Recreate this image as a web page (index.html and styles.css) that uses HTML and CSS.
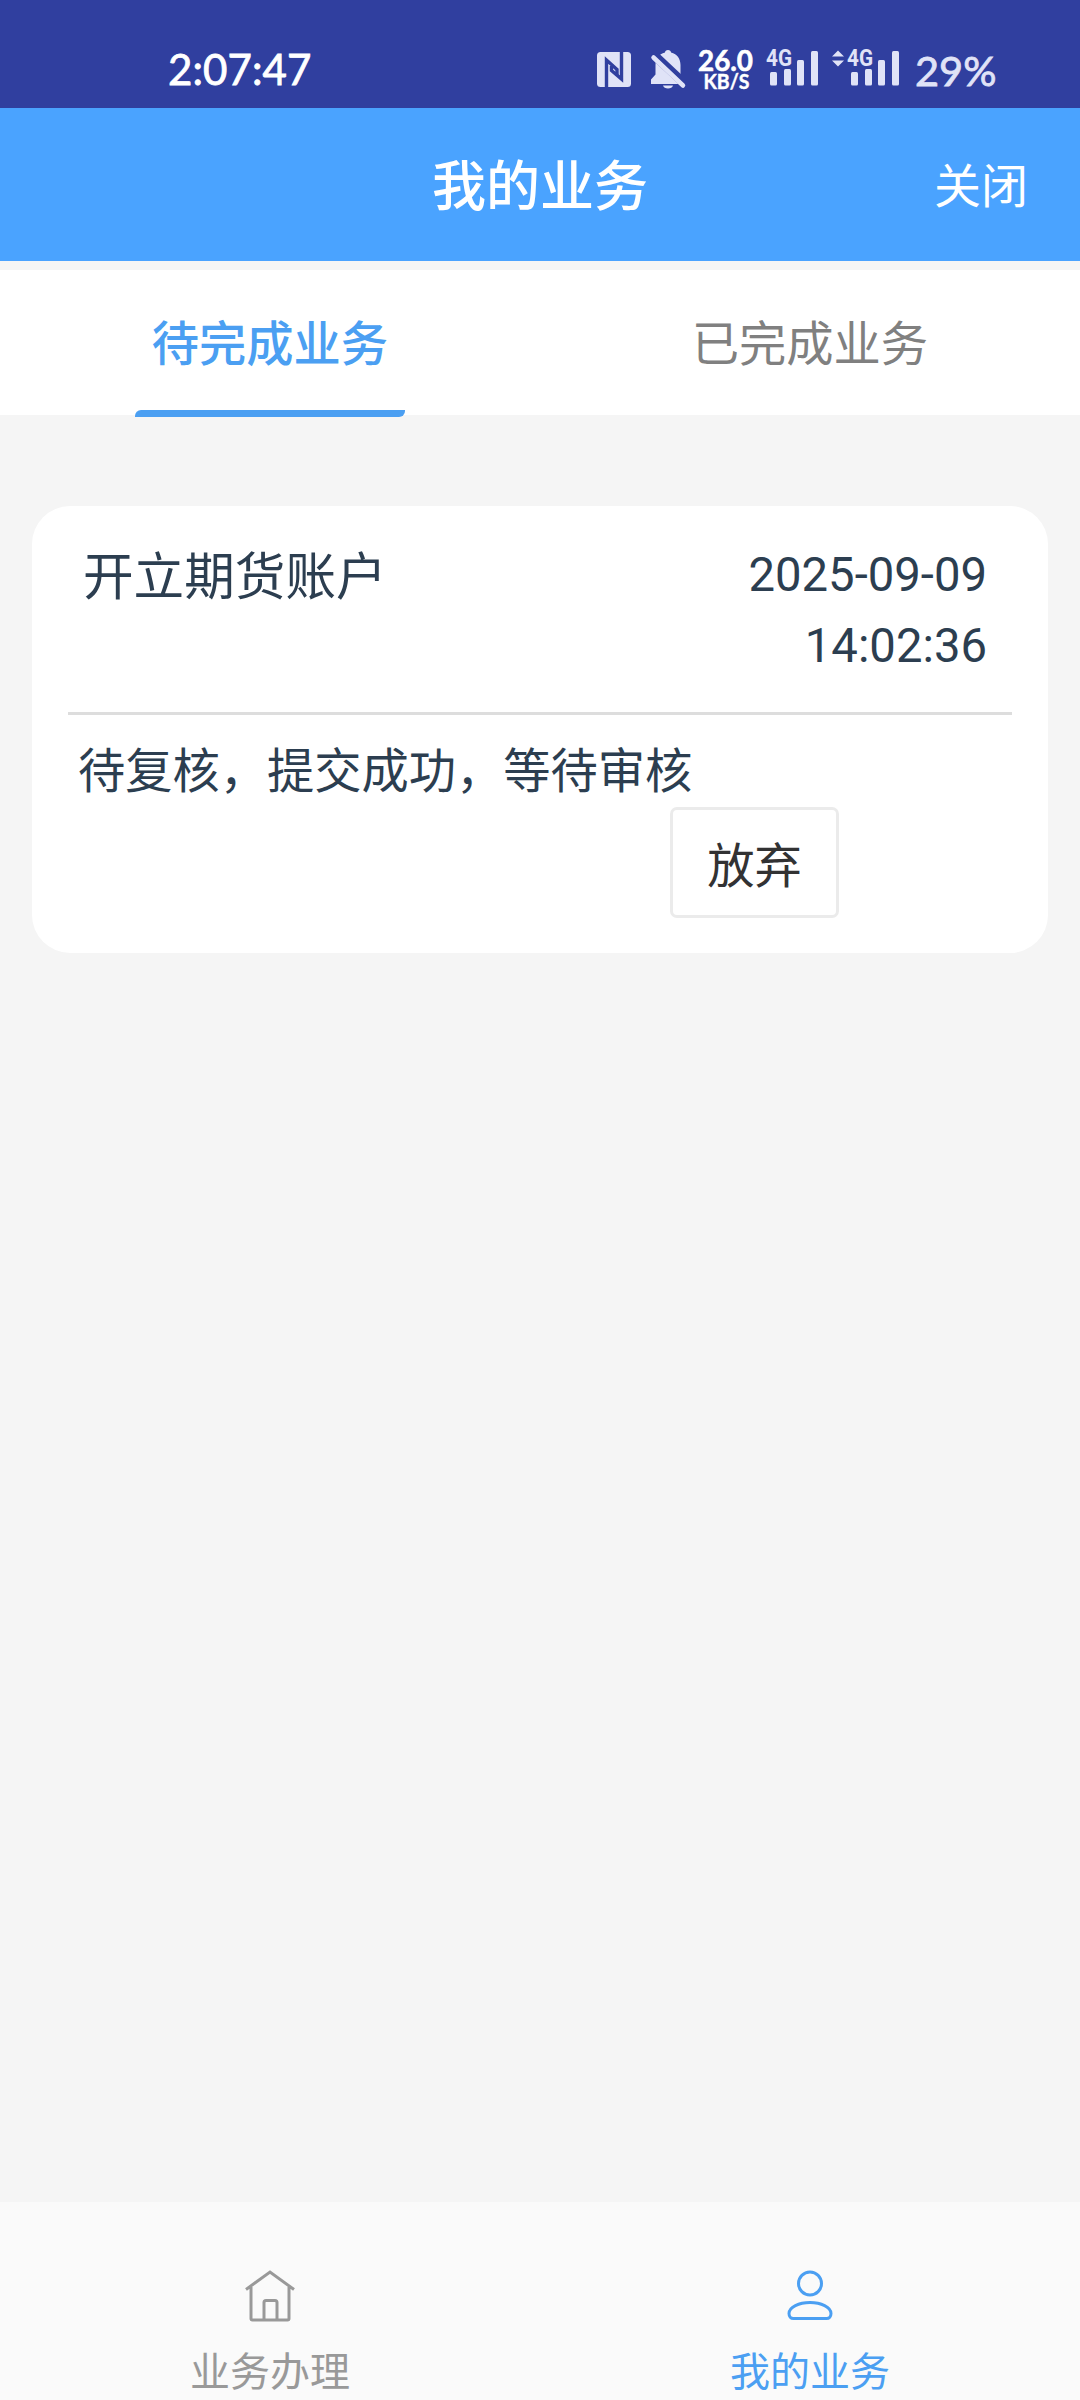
FILE: index.html
```html
<!DOCTYPE html>
<html lang="zh-CN">
<head>
<meta charset="utf-8">
<title>我的业务</title>
<link rel="stylesheet" href="styles.css">
</head>
<body>
<div class="status-bar">
  <span class="clock">2:07:47</span>
  <svg class="status-icons" width="320" height="60" viewBox="580 40 320 60">
    <rect x="597" y="52" width="34" height="35" rx="3.5"/>
    <g class="knock">
      <path d="M606.500 87V60L617 69.500V76"/>
      <path d="M621.500 52V79L611.500 70.500V66"/>
    </g>
    <path d="M668 50c1.800 0 3 1.100 3 2.600 6.300 1.400 9.500 6.400 9.500 12.400v9.500l4.500 5V84h-34v-4.500l4.500-5V65c0-6 3.200-11 9.500-12.400 0-1.500 1.200-2.600 3-2.600z"/>
    <path d="M663 85.500h10c-.5 2-2.500 3-5 3s-4.500-1-5-3z"/>
    <path class="gap" d="M653 54L686 85"/>
    <path class="slash" d="M653.500 57.500L683 85.500"/>
    <text class="speed" x="698" y="70.500" textLength="55" lengthAdjust="spacingAndGlyphs">26.0</text>
    <text class="unit" x="703.500" y="89" textLength="46" lengthAdjust="spacingAndGlyphs">KB/S</text>
    <text class="net" x="766" y="66" textLength="26" lengthAdjust="spacingAndGlyphs">4G</text>
    <rect x="770" y="72" width="7" height="13.500" rx="1.500"/>
    <rect x="784" y="69" width="7" height="16.500" rx="1.500"/>
    <rect x="797" y="60" width="7" height="25.500" rx="1.500"/>
    <rect x="811" y="51" width="7" height="34.500" rx="1.500"/>
    <path d="M832 56.500l6-6 6 6zM832 60.500l6 6 6-6z"/>
    <text class="net" x="847" y="66" textLength="26" lengthAdjust="spacingAndGlyphs">4G</text>
    <rect x="851" y="72" width="7" height="13.500" rx="1.500"/>
    <rect x="865" y="69" width="7" height="16.500" rx="1.500"/>
    <rect x="878" y="60" width="7" height="25.500" rx="1.500"/>
    <rect x="892" y="51" width="7" height="34.500" rx="1.500"/>
  </svg>
  <span class="battery">29%</span>
</div>

<header class="title-bar">
  <h1 class="title">我的业务</h1>
  <a class="close">关闭</a>
</header>

<nav class="tabs">
  <a class="tab tab-active">待完成业务</a>
  <a class="tab">已完成业务</a>
</nav>

<main class="content">
  <section class="card">
    <div class="card-head">
      <h2 class="card-title">开立期货账户</h2>
      <time class="card-time">2025-09-09<br>14:02:36</time>
    </div>
    <p class="card-status">待复核，提交成功，等待审核</p>
    <button class="abandon">放弃</button>
  </section>
</main>

<footer class="bottom-nav">
  <a class="nav-item">
    <svg class="nav-icon" width="60" height="60" viewBox="0 0 60 60">
      <path d="M6 25.500L30 8l24 17.500M11 23v31.500q0 1.500 1.500 1.500h35q1.500 0 1.500-1.500V23M24 56V38.500q0-2 2-2h9q2 0 2 2V56"/>
    </svg>
    <span>业务办理</span>
  </a>
  <a class="nav-item nav-active">
    <svg class="nav-icon" width="60" height="60" viewBox="0 0 60 60">
      <circle cx="30" cy="19.500" r="11.500"/>
      <path d="M30 38.500c11 0 21 4.500 21 11 0 3-1.800 5-4.500 5h-33c-2.700 0-4.500-2-4.500-5 0-6.500 10-11 21-11z"/>
    </svg>
    <span>我的业务</span>
  </a>
</footer>
</body>
</html>
```
FILE: styles.css
```css
* { box-sizing: border-box; }
body {
  margin: 0;
  width: 1080px;
  height: 2400px;
  overflow: hidden;
  display: flex;
  flex-direction: column;
  background: #f5f5f5;
  color: #2c3e50;
  font-family: Roboto, "Noto Sans CJK SC", sans-serif;
}
h1, h2, p { margin: 0; font-weight: 400; }

.status-bar {
  height: 108px;
  padding: 40px 0 8px 168px;
  display: flex;
  align-items: flex-start;
  background: #303f9f;
  color: #fff;
  font-family: Lato, sans-serif;
}
.clock {
  width: 412px;
  font-size: 42px;
  line-height: 58px;
  letter-spacing: 0.1px;
  -webkit-text-stroke: 0.8px currentColor;
}
.status-icons { display: block; flex: none; fill: #e0e3f7; }
.knock { fill: none; stroke: #303f9f; stroke-width: 3.4; }
.gap { stroke: #303f9f; stroke-width: 9; }
.slash { stroke: #e0e3f7; stroke-width: 4.5; stroke-linecap: round; }
.speed { font: 700 29px Lato, sans-serif; fill: #fff; stroke: #fff; stroke-width: 0.6; }
.unit { font: 700 20px Lato, sans-serif; fill: #fff; stroke: #fff; stroke-width: 0.4; }
.net { font: 700 23px Roboto, sans-serif; }
.battery {
  margin-left: 15px;
  color: #e0e3f7;
  font-size: 41.5px;
  line-height: 61px;
  -webkit-text-stroke: 0.8px currentColor;
}

.title-bar {
  height: 153px;
  padding: 0 52px 5px;
  display: grid;
  grid-template-columns: 1fr auto 1fr;
  align-items: center;
  background: #4aa3ff;
  color: #fff;
}
.title { grid-column: 2; font-size: 54px; font-weight: 500; }
.close { justify-self: end; font-size: 47px; }

.tabs {
  margin-top: 9px;
  height: 145px;
  display: flex;
  background: #fff;
}
.tab {
  flex: 1;
  height: 147px;
  display: flex;
  flex-direction: column;
  align-items: center;
  font-size: 47.25px;
  line-height: 150px;
  color: #808080;
}
.tab-active { color: #4b9ff2; font-weight: 500; }
.tab-active::after {
  content: "";
  width: 270px;
  height: 7px;
  flex: none;
  margin-top: -10px;
  border-radius: 6px 0;
  background: #4b9ff2;
}

.content { flex: 1; padding: 91px 32px 0; }
.card {
  height: 447px;
  padding: 34px 36px 0;
  display: flex;
  flex-direction: column;
  border-radius: 38px;
  background: #fff;
}
.card-head {
  height: 175px;
  padding: 0 25px 0 15px;
  display: flex;
  justify-content: space-between;
  border-bottom: 3px solid #ddd;
}
.card-title { font-size: 50.6px; line-height: 76px; }
.card-time { font-size: 47.25px; line-height: 71px; text-align: right; }
.card-status { padding-left: 10px; margin-top: 22px; font-size: 47.25px; line-height: 71px; }
.abandon {
  margin: -1px 0 0 602px;
  width: 169px;
  height: 111px;
  padding: 0;
  border: 3px solid #ebebeb;
  border-radius: 7px;
  background: #fff;
  color: #323233;
  font: 47.25px "Noto Sans CJK SC", sans-serif;
}

.bottom-nav {
  height: 198px;
  display: flex;
  background: #fafafa;
}
.nav-item {
  flex: 1;
  padding-top: 62px;
  display: flex;
  flex-direction: column;
  align-items: center;
  color: #999;
  font-size: 40px;
  line-height: 60px;
}
.nav-item span { margin-top: 19px; }
.nav-active { color: #4b9ff2; }
.nav-icon { fill: none; stroke: currentColor; stroke-width: 3; flex: none; }
```
